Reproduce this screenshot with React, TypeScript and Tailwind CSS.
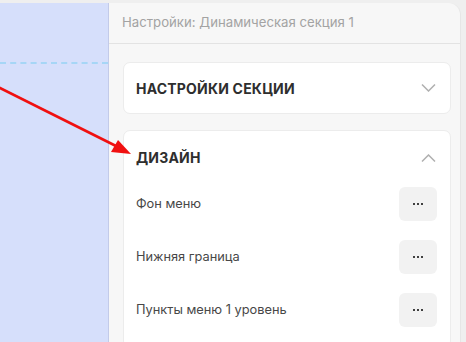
import React from 'react';

const rows = ['Фон меню', 'Нижняя граница', 'Пункты меню 1 уровень'];

const Chevron: React.FC<{ up?: boolean }> = ({ up }) => (
  <svg width="15" height="8" viewBox="0 0 15 8" fill="none" stroke="#b0b0b0" strokeWidth="1.5">
    {up ? <path d="M1 7.5 L7.5 1 L14 7.5" /> : <path d="M1 0.5 L7.5 7 L14 0.5" />}
  </svg>
);

const DotsButton: React.FC = () => (
  <button className="w-[38px] h-[34px] rounded-[6px] bg-[#f2f2f2] flex items-center justify-center gap-[1.5px]">
    <span className="w-[2.5px] h-[2.5px] bg-[#404040]" />
    <span className="w-[2.5px] h-[2.5px] bg-[#404040]" />
    <span className="w-[2.5px] h-[2.5px] bg-[#404040]" />
  </button>
);

const App: React.FC = () => {
  return (
    <div
      className="relative w-[466px] h-[342px] overflow-hidden bg-[#efefef] pt-[3px] flex"
      style={{ fontFamily: 'Inter, "Noto Sans", sans-serif' }}
    >
      {/* canvas area */}
      <div className="w-[109px] shrink-0 bg-[#d6dffb] border-r border-[#c3cbe9]">
        <div className="mt-[59px] border-t-2 border-dashed border-[#a6d6f6]" />
      </div>

      {/* settings panel */}
      <div className="w-[352px] shrink-0 bg-[#f7f7f7] rounded-tr-[12px] border-r border-[#e6e6e6]">
        <div className="h-[41px] px-[13px] flex items-center border-b border-[#e3e3e3]">
          <span className="text-[13.2px] text-[#a3a3a3]">Настройки: Динамическая секция 1</span>
        </div>

        <div className="pl-[14px] pr-[9px] pt-[18px] flex flex-col gap-[16px]">
          <div className="h-[52px] shrink-0 bg-white rounded-[7px] border border-[#ececec] pl-[12px] pr-[14px] flex items-center justify-between">
            <span className="text-[14px] font-bold text-[#2e2e2e] tracking-[0.2px]">НАСТРОЙКИ СЕКЦИИ</span>
            <Chevron />
          </div>

          <div className="shrink-0 bg-white rounded-[7px] border border-[#ececec] pl-[12px] pr-[13px] pb-[20px]">
            <div className="h-[53px] flex items-center justify-between pr-[1px]">
              <span className="text-[14px] font-bold text-[#2e2e2e] tracking-[0.2px]">ДИЗАЙН</span>
              <Chevron up />
            </div>
            <div className="pt-[3px] flex flex-col gap-[19px]">
              {rows.map((r) => (
                <div key={r} className="flex items-center justify-between">
                  <span className="text-[12.8px] text-[#474747]">{r}</span>
                  <DotsButton />
                </div>
              ))}
            </div>
          </div>
        </div>
      </div>

      {/* annotation arrow */}
      <svg className="absolute left-0 top-0" width="466" height="342" viewBox="0 0 466 342">
        <line x1="-2" y1="87" x2="116" y2="146" stroke="#f01010" strokeWidth="2.6" />
        <polygon points="131,154 111,152 118,140" fill="#f01010" />
      </svg>
    </div>
  );
};

export default App;
